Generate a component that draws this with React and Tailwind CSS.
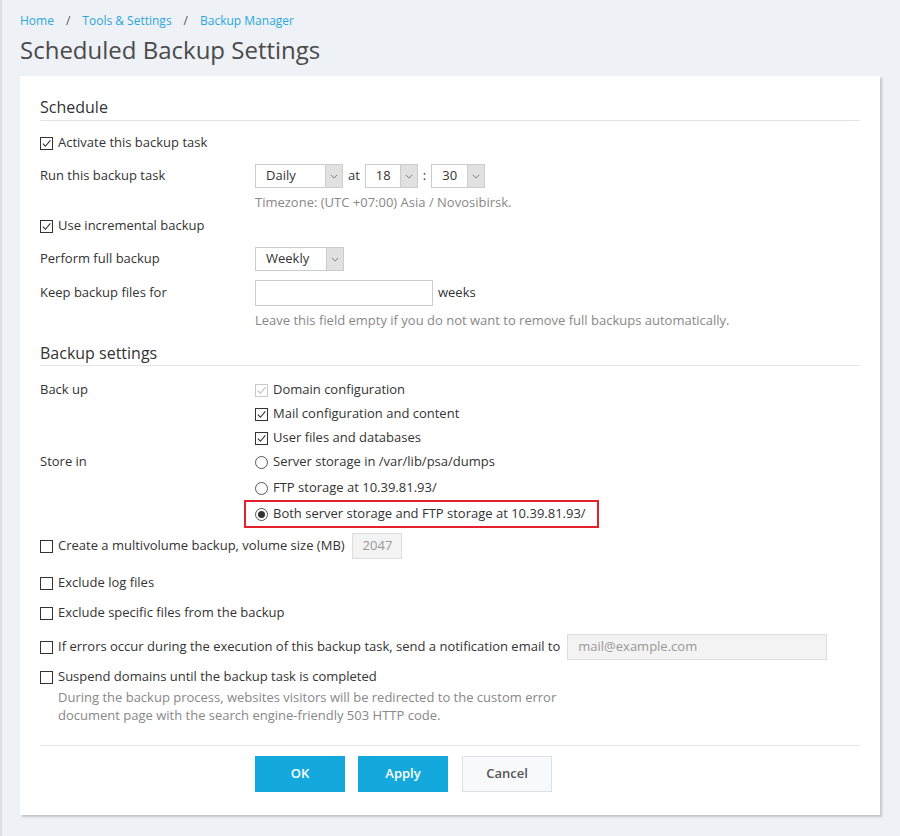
import React from "react";

const font = { fontFamily: '"Open Sans", "Noto Sans", sans-serif' };

function Check({ checked, disabled }) {
  return (
    <span
      className={
        "inline-flex h-[13px] w-[13px] shrink-0 items-center justify-center border bg-white " +
        (disabled ? "border-[#c9c9c9]" : "border-[#333]")
      }
    >
      {checked && (
        <svg viewBox="0 0 12 12" className="h-[11px] w-[11px]">
          <path
            d="M2 6.2 L4.8 9 L10.2 2.6"
            fill="none"
            stroke={disabled ? "#bdbdbd" : "#333"}
            strokeWidth="1.2"
          />
        </svg>
      )}
    </span>
  );
}

function Radio({ checked }) {
  return (
    <span className="inline-flex h-[13px] w-[13px] shrink-0 items-center justify-center rounded-full border border-[#555] bg-white">
      {checked && <span className="h-[7px] w-[7px] rounded-full bg-[#333]" />}
    </span>
  );
}

function Select({ value, width }) {
  return (
    <span
      className="inline-flex h-[24px] items-stretch border border-[#ccc] bg-white text-[13px] text-[#333]"
      style={{ width }}
    >
      <span className="flex flex-1 items-center pl-[10px]">{value}</span>
      <span className="flex w-[17px] items-center justify-center border-l border-[#ccc] bg-[#e1e1e1]">
        <svg viewBox="0 0 10 6" className="h-[5px] w-[8px]">
          <path d="M1 1 L5 5 L9 1" fill="none" stroke="#666" strokeWidth="1" />
        </svg>
      </span>
    </span>
  );
}

function CheckRow({ label, checked, disabled, className = "", children }) {
  return (
    <div className={"flex h-[24px] items-center gap-[5px] " + className}>
      <Check checked={checked} disabled={disabled} />
      <span>{label}</span>
      {children}
    </div>
  );
}

function RadioRow({ label, checked, className = "" }) {
  return (
    <div className={"flex h-[24px] items-center gap-[5px] " + className}>
      <Radio checked={checked} />
      <span>{label}</span>
    </div>
  );
}

function Field({ label, className = "", children }) {
  return (
    <div className={"flex items-center " + className}>
      <div className="w-[215px] shrink-0">{label}</div>
      <div className="flex items-center">{children}</div>
    </div>
  );
}

export default function App() {
  return (
    <div
      className="min-h-[836px] border-l-2 border-[#dcdfe4] bg-[#eef1f6] pl-[18px] pr-[20px] pb-[21px] text-[13px] text-[#333]"
      style={font}
    >
      {/* breadcrumb */}
      <div className="flex h-[40px] items-center pt-[1px] text-[12px]">
        <a className="text-[#2aa7dd]">Home</a>
        <span className="mx-[12px] text-[#555]">/</span>
        <a className="text-[#2aa7dd]">Tools &amp; Settings</a>
        <span className="mx-[12px] text-[#555]">/</span>
        <a className="text-[#2aa7dd]">Backup Manager</a>
      </div>
      <h1 className="-mt-[5px] h-[41px] text-[24px] leading-[30px] text-[#4a4a4a]">
        Scheduled Backup Settings
      </h1>

      {/* card */}
      <div className="bg-white px-[20px] pt-[20px] pb-[23px] shadow-[2px_2px_2px_rgba(0,0,0,0.18)]">
        <div className="h-[25px] border-b border-[#e2e5ea] text-[16px] leading-[22px] text-[#333]">
          Schedule
        </div>

        <CheckRow className="mt-[10px]" label="Activate this backup task" checked />

        <Field className="mt-[9px] h-[24px]" label="Run this backup task">
          <Select value="Daily" width={88} />
          <span className="mx-[5px]">at</span>
          <Select value="18" width={53} />
          <span className="mx-[5px]">:</span>
          <Select value="30" width={54} />
        </Field>
        <div className="mt-[5px] h-[18px] pl-[215px] leading-[18px] text-[#888]">
          Timezone: (UTC +07:00) Asia / Novosibirsk.
        </div>

        <CheckRow className="mt-[3px]" label="Use incremental backup" checked />

        <Field className="mt-[9px] h-[24px]" label="Perform full backup">
          <Select value="Weekly" width={89} />
        </Field>

        <Field className="mt-[9px] h-[26px]" label="Keep backup files for">
          <span className="h-[26px] w-[178px] border border-[#ccc] bg-white" />
          <span className="ml-[5px]">weeks</span>
        </Field>
        <div className="mt-[5px] h-[18px] pl-[215px] leading-[18px] text-[#888]">
          Leave this field empty if you do not want to remove full backups automatically.
        </div>

        <div className="mt-[13px] h-[24px] border-b border-[#e2e5ea] text-[16px] leading-[22px] text-[#333]">
          Backup settings
        </div>

        <div className="mt-[12px] flex">
          <div className="w-[215px] shrink-0">
            <div className="flex h-[24px] items-center">Back up</div>
          </div>
          <div>
            <CheckRow label="Domain configuration" checked disabled />
            <CheckRow className="h-[23px]" label="Mail configuration and content" checked />
            <CheckRow label="User files and databases" checked />
          </div>
        </div>

        <div className="flex">
          <div className="w-[215px] shrink-0">
            <div className="flex h-[24px] items-center">Store in</div>
          </div>
          <div>
            <RadioRow label="Server storage in /var/lib/psa/dumps" />
            <RadioRow className="mt-[2px]" label="FTP storage at 10.39.81.93/" />
            <div className="-ml-[11px] w-[355px] border-2 border-[#e3202b] pl-[9px]">
              <RadioRow label="Both server storage and FTP storage at 10.39.81.93/" checked />
            </div>
          </div>
        </div>

        <CheckRow className="mt-[5px] h-[26px]" label="Create a multivolume backup, volume size (MB)">
          <span className="ml-[2px] flex h-[26px] w-[50px] items-center border border-[#ddd] bg-[#f3f3f3] pl-[10px] text-[#999]">
            2047
          </span>
        </CheckRow>

        <CheckRow className="mt-[12px]" label="Exclude log files" />
        <CheckRow className="mt-[6px]" label="Exclude specific files from the backup" />

        <CheckRow
          className="mt-[9px] h-[26px]"
          label="If errors occur during the execution of this backup task, send a notification email to"
        >
          <span className="ml-[2px] flex h-[26px] w-[260px] items-center border border-[#ddd] bg-[#f3f3f3] pl-[10px] text-[#999]">
            mail@example.com
          </span>
        </CheckRow>

        <CheckRow className="mt-[5px]" label="Suspend domains until the backup task is completed" />
        <div className="-mt-[1px] pl-[18px] leading-[18px] text-[#888]">
          During the backup process, websites visitors will be redirected to the custom error
          <br />
          document page with the search engine-friendly 503 HTTP code.
        </div>

        <div className="mt-[21px] border-t border-[#e2e5ea]" />

        <div className="mt-[10px] flex pl-[215px]">
          <button className="h-[36px] w-[90px] bg-[#13a9dc] text-[13px] font-semibold text-white">
            OK
          </button>
          <button className="ml-[13px] h-[36px] w-[90px] bg-[#13a9dc] text-[13px] font-semibold text-white">
            Apply
          </button>
          <button className="ml-[14px] h-[36px] w-[90px] border border-[#dde0e5] bg-[#f8f9fb] text-[13px] font-semibold text-[#555]">
            Cancel
          </button>
        </div>
      </div>
    </div>
  );
}
